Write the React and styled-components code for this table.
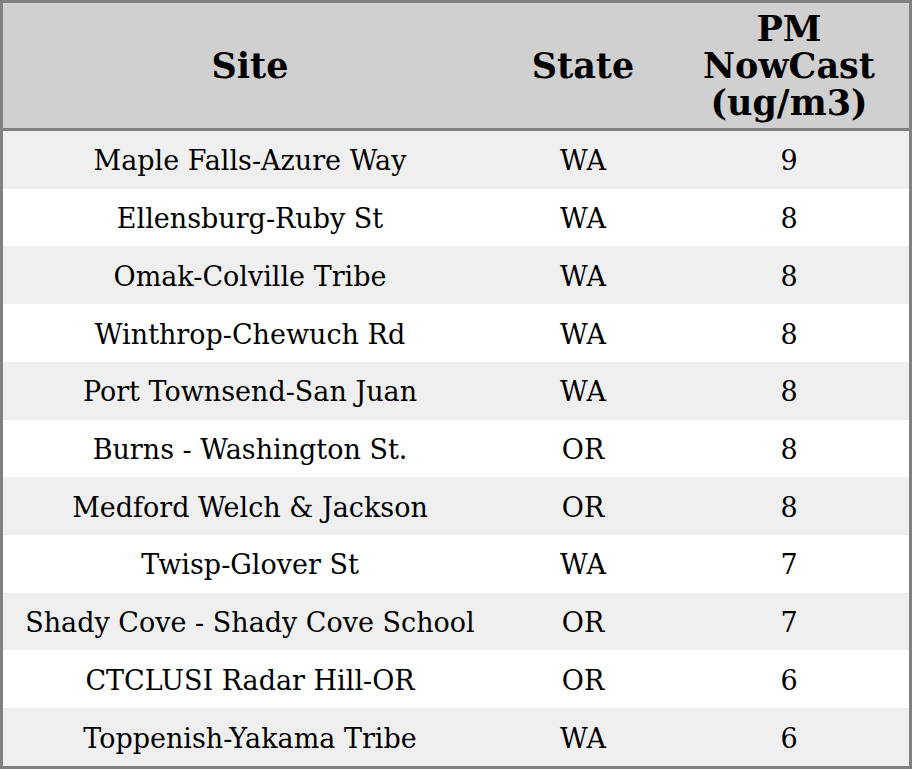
import React from "react";
import styled, { createGlobalStyle } from "styled-components";

const Global = createGlobalStyle`
  html, body { margin: 0; padding: 0; background: #ffffff; }
  body { font-family: "DejaVu Serif", serif; }
`;

const Table = styled.table`
  width: 912px;
  height: 769px;
  border-collapse: collapse;
  border: 3px solid #808080;
  box-sizing: border-box;
  table-layout: fixed;
  font-family: "DejaVu Serif", serif;
  color: #000;
`;

const HeadCell = styled.th`
  background: #d0d0d0;
  font-size: 35px;
  font-weight: bold;
  line-height: 37px;
  text-align: center;
  vertical-align: middle;
  padding: 0;
  height: 125px;
  border-bottom: 3px solid #808080;
  width: ${(p) => p.$w}px;
`;

const Row = styled.tr`
  background: ${(p) => (p.$alt ? "#efefef" : "#ffffff")};
`;

const Cell = styled.td`
  font-size: 27px;
  text-align: center;
  vertical-align: middle;
  padding: 2px 0 0;
  height: 55.7px;
`;

const rows = [
  ["Maple Falls-Azure Way", "WA", 9],
  ["Ellensburg-Ruby St", "WA", 8],
  ["Omak-Colville Tribe", "WA", 8],
  ["Winthrop-Chewuch Rd", "WA", 8],
  ["Port Townsend-San Juan", "WA", 8],
  ["Burns - Washington St.", "OR", 8],
  ["Medford Welch & Jackson", "OR", 8],
  ["Twisp-Glover St", "WA", 7],
  ["Shady Cove - Shady Cove School", "OR", 7],
  ["CTCLUSI Radar Hill-OR", "OR", 6],
  ["Toppenish-Yakama Tribe", "WA", 6],
];

export default function App() {
  return (
    <>
      <Global />
      <Table>
        <thead>
          <tr>
            <HeadCell $w={494}>Site</HeadCell>
            <HeadCell $w={172}>State</HeadCell>
            <HeadCell $w={240}>
              PM
              <br />
              NowCast
              <br />
              (ug/m3)
            </HeadCell>
          </tr>
        </thead>
        <tbody>
          {rows.map(([site, state, v], i) => (
            <Row key={site} $alt={i % 2 === 0}>
              <Cell>{site}</Cell>
              <Cell>{state}</Cell>
              <Cell>{v}</Cell>
            </Row>
          ))}
        </tbody>
      </Table>
    </>
  );
}
